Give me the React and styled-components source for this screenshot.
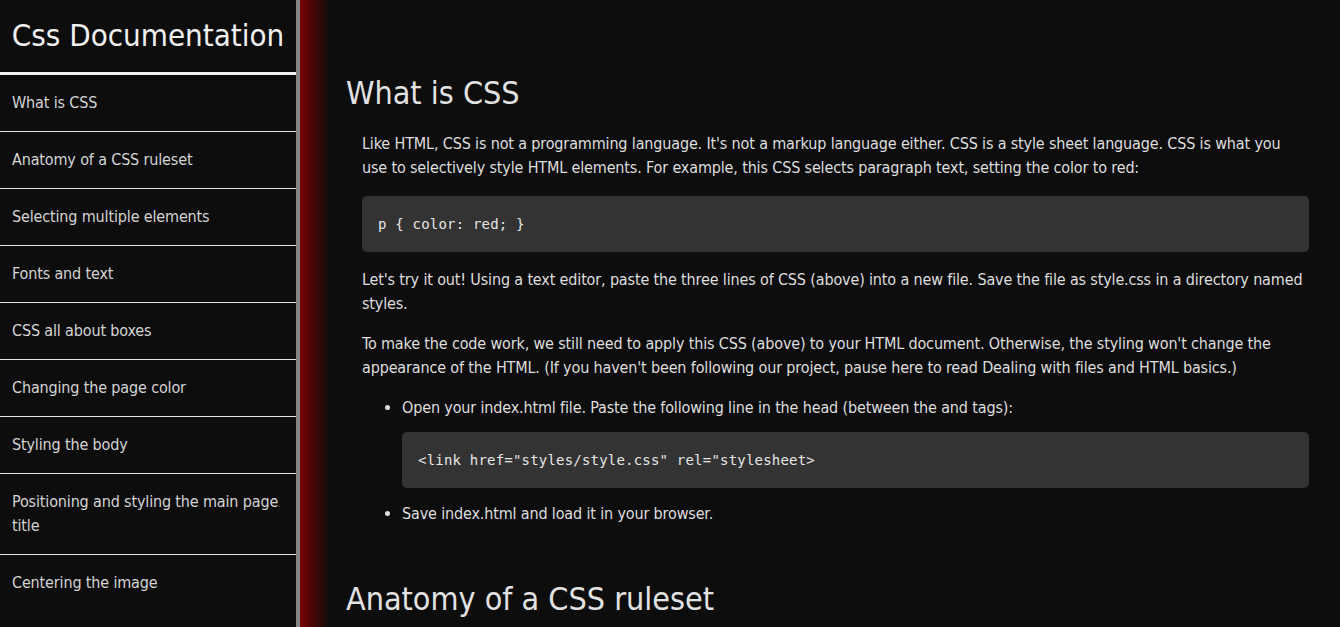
import styled, { createGlobalStyle } from "styled-components";

const GlobalStyle = createGlobalStyle`
  html, body {
    margin: 0;
    padding: 0;
    background: #0d0d0d;
  }
  body {
    font-family: "DejaVu Sans Condensed", "DejaVu Sans", sans-serif;
    color: #dedede;
  }
`;

const sections = [
  "What is CSS",
  "Anatomy of a CSS ruleset",
  "Selecting multiple elements",
  "Fonts and text",
  "CSS all about boxes",
  "Changing the page color",
  "Styling the body",
  "Positioning and styling the main page title",
  "Centering the image",
];

function App() {
  return (
    <>
      <GlobalStyle />
      <Page>
        <Nav>
          <NavHeader>Css Documentation</NavHeader>
          <NavList>
            {sections.map((s) => (
              <NavLink key={s} href="#">
                {s}
              </NavLink>
            ))}
          </NavList>
        </Nav>
        <Main>
          <Section>
            <Title>What is CSS</Title>
            <Text>
              Like HTML, CSS is not a programming language. It's not a markup
              language either. CSS is a style sheet language. CSS is what you
              use to selectively style HTML elements. For example, this CSS
              selects paragraph text, setting the color to red:
            </Text>
            <Code>p {"{"} color: red; {"}"}</Code>
            <Text>
              Let's try it out! Using a text editor, paste the three lines of
              CSS (above) into a new file. Save the file as style.css in a
              directory named styles.
            </Text>
            <Text>
              To make the code work, we still need to apply this CSS (above) to
              your HTML document. Otherwise, the styling won't change the
              appearance of the HTML. (If you haven't been following our
              project, pause here to read Dealing with files and HTML basics.)
            </Text>
            <List>
              <Item>
                Open your index.html file. Paste the following line in the head
                (between the and tags):
                <Code $nested>{'<link href="styles/style.css" rel="stylesheet>'}</Code>
              </Item>
              <Item>Save index.html and load it in your browser.</Item>
            </List>
          </Section>
          <Section>
            <Title>Anatomy of a CSS ruleset</Title>
          </Section>
        </Main>
      </Page>
    </>
  );
}

export default App;

const Page = styled.div`
  display: flex;
  height: 100vh;
  overflow: hidden;
`;

const Nav = styled.nav`
  flex: 0 0 296px;
  background: #0d0d0d;
  border-right: 4px solid #858585;
  height: 100%;
  overflow: hidden;
`;

const NavHeader = styled.header`
  height: 70px;
  padding-bottom: 2px;
  display: flex;
  align-items: center;
  justify-content: center;
  font-size: 31px;
  color: #f0f0f0;
  border-bottom: 3px solid #f2f2f2;
  white-space: nowrap;
`;

const NavList = styled.div`
  display: flex;
  flex-direction: column;
`;

const NavLink = styled.a`
  display: block;
  padding: 16px 12px;
  line-height: 24px;
  font-size: 16px;
  letter-spacing: -0.15px;
  color: #d4d4d4;
  text-decoration: none;

  & + & {
    border-top: 1px solid #e6e6e6;
  }
`;

const Main = styled.main`
  flex: 1;
  height: 100%;
  overflow: hidden;
  padding: 58px 31px 0 46px;
  letter-spacing: -0.15px;
  background: linear-gradient(90deg, #7c0606 0px, #5a0505 8px, #0d0d0d 30px);
`;

const Section = styled.section`
  margin-bottom: 54px;
`;

const Title = styled.h2`
  margin: 16px 0 20px;
  font-size: 32px;
  font-weight: normal;
  line-height: 38px;
  letter-spacing: 0;
  color: #e2e2e2;
`;

const Text = styled.p`
  margin: 0 0 16px 16px;
  font-size: 16px;
  line-height: 24px;
`;

const Code = styled.pre`
  margin: ${(p) => (p.$nested ? "12px 0 14px 0" : "16px 0 16px 16px")};
  padding: 16px;
  background: #333333;
  border-radius: 5px;
  font-family: "DejaVu Sans Mono", monospace;
  font-size: 14px;
  line-height: 24px;
  letter-spacing: 0.2px;
  color: #e6e6e6;
  white-space: pre;
`;

const List = styled.ul`
  margin: 16px 0 0 16px;
  padding-left: 40px;
  font-size: 16px;
  line-height: 24px;
`;

const Item = styled.li`
  margin-bottom: 8px;
`;
